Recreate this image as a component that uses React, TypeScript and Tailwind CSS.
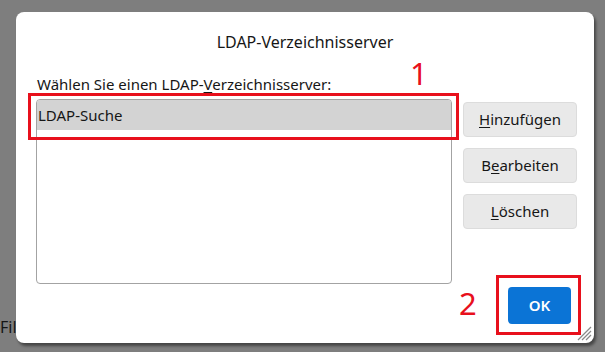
import React from "react";

const font = { fontFamily: '"Noto Sans", "Open Sans", sans-serif' };

function Btn({ pre, u, post }: { pre: string; u: string; post: string }) {
  return (
    <button className="w-[114px] h-[35px] rounded-[4px] border border-[#dcdcdc] bg-[#e9e9e9] text-[15px] text-[#161616] flex items-center justify-center">
      {pre}
      <span className="underline underline-offset-2">{u}</span>
      {post}
    </button>
  );
}

export default function App() {
  return (
    <div className="relative w-[605px] h-[352px] bg-[#7e7e7e] overflow-hidden" style={font}>
      <div className="absolute left-0 top-[315px] text-[16px] text-[#161616]">File</div>
      <div className="relative ml-[16px] mt-[12px] w-[578px] h-[331px] bg-white rounded-[8px] shadow-[2px_3px_3px_rgba(0,0,0,0.45)] flex flex-col">
        <div className="pt-[20px] text-center text-[16px] text-[#161616] leading-[20px]">LDAP-Verzeichnisserver</div>
        <div className="mt-[22px] pl-[21px] text-[15px] text-[#161616] leading-[20px]">
          Wählen Sie einen LDAP-<span className="underline underline-offset-2">V</span>erzeichnisserver:
        </div>
        <div className="mt-[5px] ml-[20px] flex gap-[11px]">
          <div className="w-[416px] h-[185px] rounded-[4px] border border-[#a3a3a3] overflow-hidden">
            <div className="h-[30px] bg-[#d3d3d3] flex items-center pl-[1px] text-[15px] text-[#161616]">LDAP-Suche</div>
          </div>
          <div className="mt-[3px] flex flex-col gap-[11px]">
            <Btn pre="" u="H" post="inzufügen" />
            <Btn pre="B" u="e" post="arbeiten" />
            <Btn pre="" u="L" post="öschen" />
          </div>
        </div>
        <div className="mt-[3px] flex justify-end pr-[23px]">
          <button className="w-[63px] h-[37px] rounded-[4px] bg-[#0b74d6] text-white text-[15px] font-semibold flex items-center justify-center">
            OK
          </button>
        </div>
        <svg className="absolute right-[2px] bottom-[2px]" width="18" height="18" viewBox="0 0 18 18">
          <g stroke="#8a8a8a" strokeWidth="1.2">
            <line x1="4" y1="17" x2="17" y2="4" />
            <line x1="8" y1="17" x2="17" y2="8" />
            <line x1="12" y1="17" x2="17" y2="12" />
          </g>
        </svg>
      </div>
      {/* annotations */}
      <div className="absolute left-[28px] top-[93px] w-[431px] h-[47px] border-[3px] border-[#e8101c]" />
      <div className="absolute left-[496px] top-[275px] w-[85px] h-[60px] border-[3px] border-[#e8101c]" />
      <div className="absolute left-[410px] top-[53px] text-[31px] leading-[40px] text-[#e8101c]">1</div>
      <div className="absolute left-[459px] top-[283px] text-[31px] leading-[40px] text-[#e8101c]">2</div>
    </div>
  );
}
